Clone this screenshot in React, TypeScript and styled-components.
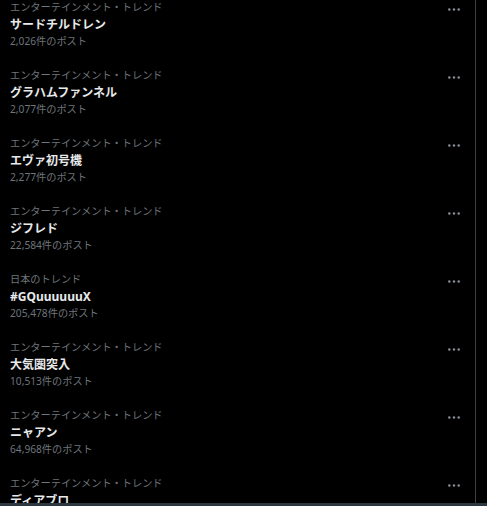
import { FC } from "react";
import styled, { createGlobalStyle } from "styled-components";

interface ITrend {
  id: number;
  category: string;
  name: string;
  posts: string;
}

const trends: ITrend[] = [
  { id: 1, category: "エンターテインメント・トレンド", name: "サードチルドレン", posts: "2,026件のポスト" },
  { id: 2, category: "エンターテインメント・トレンド", name: "グラハムファンネル", posts: "2,077件のポスト" },
  { id: 3, category: "エンターテインメント・トレンド", name: "エヴァ初号機", posts: "2,277件のポスト" },
  { id: 4, category: "エンターテインメント・トレンド", name: "ジフレド", posts: "22,584件のポスト" },
  { id: 5, category: "日本のトレンド", name: "#GQuuuuuuX", posts: "205,478件のポスト" },
  { id: 6, category: "エンターテインメント・トレンド", name: "大気圏突入", posts: "10,513件のポスト" },
  { id: 7, category: "エンターテインメント・トレンド", name: "ニャアン", posts: "64,968件のポスト" },
  { id: 8, category: "エンターテインメント・トレンド", name: "ディアブロ", posts: "" },
];

const GlobalStyle = createGlobalStyle`
  html, body {
    margin: 0;
    padding: 0;
    background: #000;
  }
  body {
    font-family: "Noto Sans", "Noto Sans CJK JP", sans-serif;
  }
`;

const Page = styled.div`
  height: 100vh;
  display: flex;
  flex-direction: column;
  background: #000;
  overflow: hidden;
`;

const Viewport = styled.div`
  flex: 1;
  display: flex;
  min-height: 0;
  overflow: hidden;
`;

const Column = styled.div`
  width: 475px;
  border-right: 1px solid #3d4145;
  overflow: hidden;
`;

// list is scrolled a little, the first row is cut at the top
const TrendList = styled.div`
  margin-top: -12px;
`;

const TrendRow = styled.div`
  display: flex;
  align-items: flex-start;
  justify-content: space-between;
  padding: 11px 15px 8px 10px;
  height: 49px;
`;

const TrendText = styled.div`
  display: flex;
  flex-direction: column;
`;

const Category = styled.span`
  font-size: 10.2px;
  line-height: 17px;
  color: #6e757b;
`;

const Name = styled.span`
  font-size: 12px;
  line-height: 18px;
  font-weight: 700;
  color: #e7e9ea;
`;

const Posts = styled.span`
  font-size: 10.2px;
  line-height: 14px;
  color: #6e757b;
`;

const MoreButton = styled.div`
  margin-top: 9px;
  display: flex;
  color: #8b9095;
`;

const BottomBar = styled.div`
  height: 3px;
  background: #2b3840;
`;

const MoreIcon: FC = () => (
  <svg width="12" height="3" viewBox="0 0 12 3">
    <circle cx="1.3" cy="1.5" r="1.2" fill="currentColor" />
    <circle cx="6" cy="1.5" r="1.2" fill="currentColor" />
    <circle cx="10.7" cy="1.5" r="1.2" fill="currentColor" />
  </svg>
);

const App: FC = () => (
  <Page>
    <GlobalStyle />
    <Viewport>
      <Column>
        <TrendList>
          {trends.map((trend) => (
            <TrendRow key={trend.id}>
              <TrendText>
                <Category>{trend.category}</Category>
                <Name>{trend.name}</Name>
                <Posts>{trend.posts}</Posts>
              </TrendText>
              <MoreButton>
                <MoreIcon />
              </MoreButton>
            </TrendRow>
          ))}
        </TrendList>
      </Column>
    </Viewport>
    <BottomBar />
  </Page>
);

export default App;
